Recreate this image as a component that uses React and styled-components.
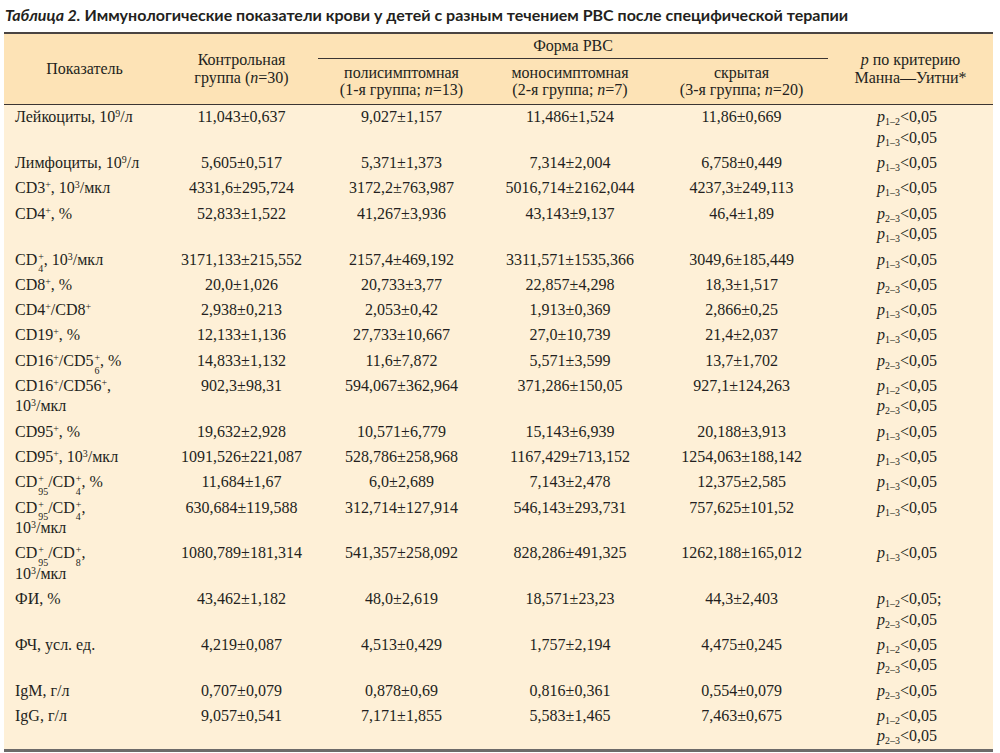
import React from 'react'
import styled, { createGlobalStyle } from 'styled-components'

const GlobalStyle = createGlobalStyle`
  html, body {
    margin: 0;
    padding: 0;
    background: #ffffff;
  }
`

const Sup = styled.sup`
  font-size: 0.62em;
  line-height: 0;
  vertical-align: 0.55em;
`

const Sub = styled.sub`
  font-size: 0.62em;
  line-height: 0;
  vertical-align: -0.3em;
`

// superscript "+" over a subscript index, as in CD₄⁺
const StackWrap = styled.span`
  display: inline-flex;
  flex-direction: column;
  font-size: 0.62em;
  line-height: 1.3;
  vertical-align: 0.5em;
  margin: -0.9em 0 -0.9em 1px;
  text-align: left;
`

const Stack = ({ sub }) => (
  <StackWrap>
    <span>+</span>
    <span>{sub}</span>
  </StackWrap>
)

const PItem = styled.div`
  white-space: nowrap;
`

const PLetter = styled.i`
  font-style: italic;
`

const P = ({ g, tail = '' }) => (
  <PItem>
    <PLetter>p</PLetter>
    <Sub>{g}</Sub>&lt;0,05{tail}
  </PItem>
)

const ROWS = [
  {
    label: <>Лейкоциты, 10<Sup>9</Sup>/л</>,
    vals: ['11,043±0,637', '9,027±1,157', '11,486±1,524', '11,86±0,669'],
    p: [['1–2'], ['1–3']]
  },
  {
    label: <>Лимфоциты, 10<Sup>9</Sup>/л</>,
    vals: ['5,605±0,517', '5,371±1,373', '7,314±2,004', '6,758±0,449'],
    p: [['1–3']]
  },
  {
    label: <>CD3<Sup>+</Sup>, 10<Sup>3</Sup>/мкл</>,
    vals: ['4331,6±295,724', '3172,2±763,987', '5016,714±2162,044', '4237,3±249,113'],
    p: [['1–3']]
  },
  {
    label: <>CD4<Sup>+</Sup>, %</>,
    vals: ['52,833±1,522', '41,267±3,936', '43,143±9,137', '46,4±1,89'],
    p: [['2–3'], ['1–3']]
  },
  {
    label: <>CD<Stack sub="4" />, 10<Sup>3</Sup>/мкл</>,
    vals: ['3171,133±215,552', '2157,4±469,192', '3311,571±1535,366', '3049,6±185,449'],
    p: [['1–3']]
  },
  {
    label: <>CD8<Sup>+</Sup>, %</>,
    vals: ['20,0±1,026', '20,733±3,77', '22,857±4,298', '18,3±1,517'],
    p: [['2–3']]
  },
  {
    label: <>CD4<Sup>+</Sup>/CD8<Sup>+</Sup></>,
    vals: ['2,938±0,213', '2,053±0,42', '1,913±0,369', '2,866±0,25'],
    p: [['1–3']]
  },
  {
    label: <>CD19<Sup>+</Sup>, %</>,
    vals: ['12,133±1,136', '27,733±10,667', '27,0±10,739', '21,4±2,037'],
    p: [['1–3']]
  },
  {
    label: <>CD16<Sup>+</Sup>/CD5<Stack sub="6" />, %</>,
    vals: ['14,833±1,132', '11,6±7,872', '5,571±3,599', '13,7±1,702'],
    p: [['2–3']]
  },
  {
    label: <>CD16<Sup>+</Sup>/CD56<Sup>+</Sup>,<br />10<Sup>3</Sup>/мкл</>,
    vals: ['902,3±98,31', '594,067±362,964', '371,286±150,05', '927,1±124,263'],
    p: [['1–2'], ['2–3']]
  },
  {
    label: <>CD95<Sup>+</Sup>, %</>,
    vals: ['19,632±2,928', '10,571±6,779', '15,143±6,939', '20,188±3,913'],
    p: [['1–3']]
  },
  {
    label: <>CD95<Sup>+</Sup>, 10<Sup>3</Sup>/мкл</>,
    vals: ['1091,526±221,087', '528,786±258,968', '1167,429±713,152', '1254,063±188,142'],
    p: [['1–3']]
  },
  {
    label: <>CD<Stack sub="95" />/CD<Stack sub="4" />, %</>,
    vals: ['11,684±1,67', '6,0±2,689', '7,143±2,478', '12,375±2,585'],
    p: [['1–3']]
  },
  {
    label: <>CD<Stack sub="95" />/CD<Stack sub="4" />,<br />10<Sup>3</Sup>/мкл</>,
    vals: ['630,684±119,588', '312,714±127,914', '546,143±293,731', '757,625±101,52'],
    p: [['1–3']]
  },
  {
    label: <>CD<Stack sub="95" />/CD<Stack sub="8" />,<br />10<Sup>3</Sup>/мкл</>,
    vals: ['1080,789±181,314', '541,357±258,092', '828,286±491,325', '1262,188±165,012'],
    p: [['1–3']]
  },
  {
    label: <>ФИ, %</>,
    vals: ['43,462±1,182', '48,0±2,619', '18,571±23,23', '44,3±2,403'],
    p: [['1–2', ';'], ['2–3']]
  },
  {
    label: <>ФЧ, усл. ед.</>,
    vals: ['4,219±0,087', '4,513±0,429', '1,757±2,194', '4,475±0,245'],
    p: [['1–2'], ['2–3']]
  },
  {
    label: <>IgM, г/л</>,
    vals: ['0,707±0,079', '0,878±0,69', '0,816±0,361', '0,554±0,079'],
    p: [['2–3']]
  },
  {
    label: <>IgG, г/л</>,
    vals: ['9,057±0,541', '7,171±1,855', '5,583±1,465', '7,463±0,675'],
    p: [['1–2'], ['2–3']]
  }
]

export default function App() {
  return (
    <Page>
      <GlobalStyle />
      <Title>
        <TitleLead>Таблица 2.</TitleLead> Иммунологические показатели крови у детей с разным течением РВС после специфической терапии
      </Title>

      <Table>
        <colgroup>
          <col style={{ width: 161 }} />
          <col style={{ width: 153 }} />
          <col style={{ width: 167 }} />
          <col style={{ width: 170 }} />
          <col style={{ width: 173 }} />
          <col style={{ width: 165 }} />
        </colgroup>
        <thead>
          <tr>
            <HeadCell rowSpan={2}>Показатель</HeadCell>
            <HeadCell rowSpan={2}>
              Контрольная<br />группа (<i>n</i>=30)
            </HeadCell>
            <GroupCell colSpan={3}>Форма РВС</GroupCell>
            <HeadCell rowSpan={2}>
              <i>p</i> по критерию<br />Манна—Уитни*
            </HeadCell>
          </tr>
          <tr>
            <SubHeadCell>
              полисимптомная<br />(1-я группа; <i>n</i>=13)
            </SubHeadCell>
            <SubHeadCell>
              моносимптомная<br />(2-я группа; <i>n</i>=7)
            </SubHeadCell>
            <SubHeadCell>
              скрытая<br />(3-я группа; <i>n</i>=20)
            </SubHeadCell>
          </tr>
        </thead>
        <tbody>
          {ROWS.map((row, i) => (
            <tr key={i}>
              <LabelCell>{row.label}</LabelCell>
              {row.vals.map((v, j) => (
                <ValueCell key={j}>{v}</ValueCell>
              ))}
              <PCell>
                {row.p.map(([g, tail], k) => (
                  <P key={k} g={g} tail={tail} />
                ))}
              </PCell>
            </tr>
          ))}
        </tbody>
      </Table>
    </Page>
  )
}

const Page = styled.div`
  width: 989px;
  padding: 5px 0 0 4px;
  color: #231f20;
`

const Title = styled.div`
  font-family: Lato, 'Noto Sans', sans-serif;
  font-weight: 700;
  font-size: 16px;
  line-height: 19px;
  padding-left: 1px;
  margin-bottom: 8px;
  white-space: nowrap;
`

const TitleLead = styled.span`
  font-style: italic;
`

const Table = styled.table`
  width: 989px;
  table-layout: fixed;
  border-collapse: collapse;
  font-family: 'Liberation Serif', 'Times New Roman', serif;
  font-size: 16px;
  line-height: 20.5px;
  background: #fef0d7;
  border-top: 2px solid #4a4442;
  border-bottom: 3px solid #6d6a69;

  thead {
    background: #fde3b6;
    border-bottom: 1.5px solid #3b3533;
  }

  i {
    font-style: italic;
  }
`

const HeadCell = styled.th`
  font-weight: 400;
  text-align: center;
  vertical-align: middle;
  line-height: 18.5px;
  padding: 0;
`

const GroupCell = styled.th`
  font-weight: 400;
  text-align: center;
  height: 24px;
  padding: 0;
  line-height: 22px;
  border-bottom: 1px solid #3b3533;
`

const SubHeadCell = styled.th`
  font-weight: 400;
  text-align: center;
  line-height: 17px;
  padding: 5px 0 6px;
`

const LabelCell = styled.td`
  text-align: left;
  vertical-align: top;
  padding: 2.4px 0 2.4px 11px;
  white-space: nowrap;
`

const ValueCell = styled.td`
  text-align: center;
  vertical-align: top;
  padding: 2.4px 0;
  white-space: nowrap;
`

const PCell = styled.td`
  text-align: left;
  vertical-align: top;
  padding: 2.4px 0 2.4px 49px;
`
